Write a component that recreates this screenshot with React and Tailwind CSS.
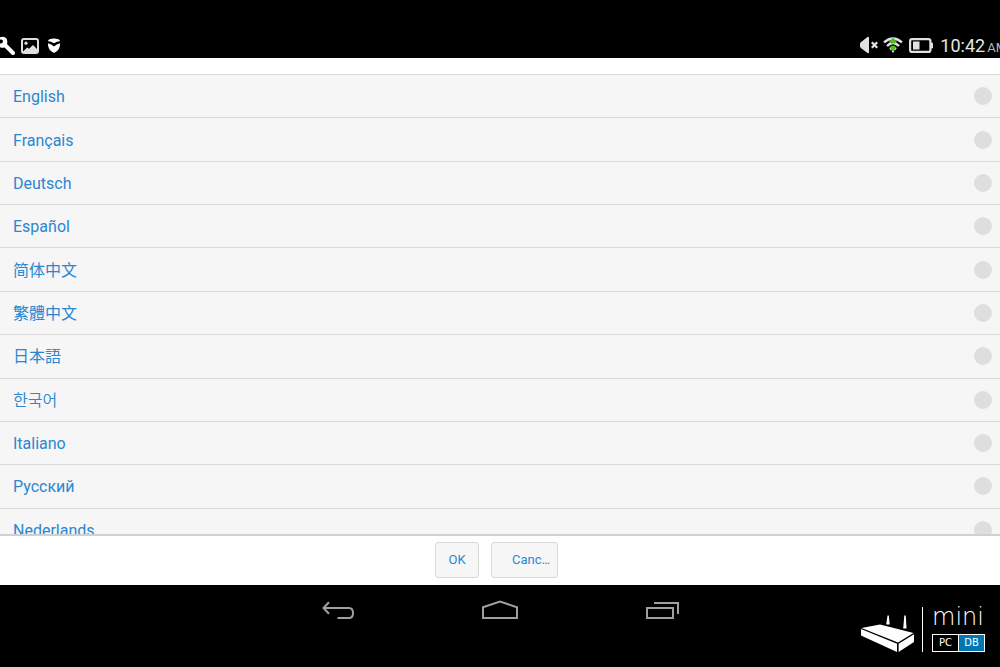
const LANGUAGES = [
  { code: 'en', name: 'English' },
  { code: 'fr', name: 'Français' },
  { code: 'de', name: 'Deutsch' },
  { code: 'es', name: 'Español' },
  { code: 'zh-CN', name: '简体中文', font: "font-['Roboto','Noto_Sans_CJK_SC',sans-serif]" },
  { code: 'zh-TW', name: '繁體中文', font: "font-['Roboto','Noto_Sans_CJK_TC',sans-serif]" },
  { code: 'ja', name: '日本語', font: "font-['Roboto','Noto_Sans_CJK_JP',sans-serif]" },
  { code: 'ko', name: '한국어', font: "font-['Roboto','Noto_Sans_CJK_KR',sans-serif] font-[350]" },
  { code: 'it', name: 'Italiano' },
  { code: 'ru', name: 'Русский' },
  { code: 'nl', name: 'Nederlands' },
]

function StatusBar() {
  return (
    <header className="h-[58px] shrink-0 bg-black text-[#e6e6e6] flex items-end justify-between overflow-hidden pb-[2px]">
      {/* Notifications */}
      <div className="flex items-center h-5 gap-[6px]">
        <svg className="w-[15px] h-5" viewBox="0 0 15 20" fill="none">
          <path d="M4.5 8.5 13 17" stroke="white" strokeWidth="4" strokeLinecap="round" />
          <path d="M0 1.2 3.5 0.8C7 1.5 8 5 7 8.5L4.5 11.5C2.5 12 1 12 0 11V7.5L2.2 7.2 3.2 4.8 1.5 3.4 0 3.4Z" fill="white" />
        </svg>
        <svg className="w-[18px] h-4" viewBox="0 0 18 16" fill="none">
          <rect x="1" y="1" width="16" height="14" rx="2" stroke="#dedede" strokeWidth="2" />
          <circle cx="5" cy="5.2" r="1.6" fill="#dedede" />
          <path d="M2 14.5V13.5L6.2 9.5 8 10.8 12 7 16 11V14.5Z" fill="#dedede" />
        </svg>
        <svg className="w-[18px] h-4" viewBox="0 0 18 16" fill="white">
          <path d="M4.5 1.2Q9 0 13.5 1.2Q15.5 2 14.8 3.2Q12 3.4 9 5.2Q6 3.4 3.2 3.2Q2.5 2 4.5 1.2Z" />
          <path d="M3 5.2Q6.5 5.8 9 8.6Q11.5 5.8 15 5.2Q15.6 12 9 15Q2.4 12 3 5.2Z" />
        </svg>
      </div>

      {/* System icons and clock */}
      <div className="flex items-center h-5 shrink-0 -mr-[7px]">
        <svg className="w-[19px] h-5" viewBox="0 0 19 20" fill="none">
          <path d="M0 8Q0 6.2 1.5 5.8L7.5 1Q9 0.2 9 2V16Q9 17.8 7.5 17L1.5 12.4Q0 11.8 0 10Z" fill="#e2e2e2" />
          <path d="M11.8 6.2 17.2 11.8M17.2 6.2 11.8 11.8" stroke="#e2e2e2" strokeWidth="2.2" />
        </svg>
        <svg className="w-5 h-5 ml-1" viewBox="0 0 20 20" fill="none">
          <path d="M1 6.3Q10-1.5 19 6.3M4 10Q10 4 16 10M7 13.2Q10 11 13 13.2" stroke="#e2e2e2" strokeWidth="2.4" />
          <path d="M10 1.8 14 6H12V7.5H8V6H6Z" fill="#45c414" />
          <path d="M8 9.8H12V10.8H14L10 15 6 10.8H8Z" fill="#45c414" />
          <path d="M8.3 14.6H11.7L10 17Z" fill="#e2e2e2" />
        </svg>
        <svg className="w-6 h-5 ml-[6px]" viewBox="0 0 24 20" fill="none">
          <rect x="1.1" y="3.1" width="20.3" height="12.8" rx="2" stroke="#e2e2e2" strokeWidth="2.2" />
          <path d="M22 6.5H22.8Q24 6.5 24 7.7V11.3Q24 12.5 22.8 12.5H22Z" fill="#e2e2e2" />
          <rect x="4" y="5.5" width="6.5" height="8" fill="#e2e2e2" />
        </svg>
        <time className="ml-[7px] pt-0.5 text-lg leading-5 whitespace-nowrap">
          10:42<span className="ml-0.5 text-[13px] leading-5 text-[#b5b5b5]">AM</span>
        </time>
      </div>
    </header>
  )
}

function LanguageRow({ language }) {
  return (
    <label className="flex items-center justify-between pl-[13px] pr-2 border-t border-[#d9d9d9] bg-[#f6f6f6] text-base leading-6">
      <span lang={language.code} className={`pt-0.5 ${language.font ?? ''}`}>{language.name}</span>
      <input
        type="radio"
        name="language"
        value={language.code}
        className="appearance-none size-[18px] rounded-full bg-[#dedede] checked:bg-[#2a87d0]"
      />
    </label>
  )
}

function Logo() {
  return (
    <div className="absolute right-[15px] bottom-[15px] flex h-[45px]">
      <svg className="w-[53px] h-[45px]" viewBox="0 0 53 45" fill="white">
        <path d="M0.5 21 19 17.5 52.5 26 37 35.5Z" />
        <path d="M0 22 36 36.8V45L0 28.5Z" />
        <path d="M37.6 36.8 53 27.2V35L37.6 45Z" />
        <path d="M26.5 8.5 27.8 8.5 28.7 17.5H25.2Z" />
        <path d="M43.3 8.5 44.8 8.5 45.5 21.5H42.2Z" />
      </svg>
      <div className="ml-2 w-px bg-white" />
      <div className="ml-[9px] w-[53px] flex flex-col justify-between text-white">
        <span className="text-2xl leading-5 font-extralight font-['DejaVu_Sans_Light','DejaVu_Sans',sans-serif]">mini</span>
        <div className="flex h-[18px] border border-white text-[10px] leading-4 text-center font-['DejaVu_Sans',sans-serif]">
          <span className="flex-1">PC</span>
          <span className="flex-1 border-l border-white bg-[#0077b0]">DB</span>
        </div>
      </div>
    </div>
  )
}

function NavBar() {
  return (
    <nav className="relative h-[82px] shrink-0 bg-black text-[#a0a0a0] flex justify-center">
      <button type="button" aria-label="Back" className="w-[162px] h-[50px] flex items-center justify-center">
        <svg className="w-9 h-5" viewBox="0 0 36 20" fill="none" stroke="currentColor" strokeWidth="2">
          <path d="M3.5 8H29Q33 8 33 13T29 18H17.5M9 2.2 3.5 8 9 13.8" />
        </svg>
      </button>
      <button type="button" aria-label="Home" className="w-[162px] h-[50px] flex items-center justify-center">
        <svg className="w-9 h-5" viewBox="0 0 36 20" fill="none" stroke="currentColor" strokeWidth="2">
          <path d="M1 7.3 18 1.5 35 7.3V18H1Z" />
        </svg>
      </button>
      <button type="button" aria-label="Recent apps" className="w-[162px] h-[50px] flex items-center justify-center">
        <svg className="w-9 h-5" viewBox="0 0 36 20" fill="none" stroke="currentColor" strokeWidth="2">
          <path d="M3 8H29V18H3ZM10 3H34V14" />
        </svg>
      </button>
      <Logo />
    </nav>
  )
}

export default function App() {
  return (
    <div className="h-screen flex flex-col bg-white text-[#2a87d0] overflow-hidden font-['Roboto',sans-serif]">
      <StatusBar />
      <main className="flex-1 min-h-0 flex flex-col pt-4">
        <div className="flex-1 min-h-0 overflow-hidden">
          <div className="grid auto-rows-fr h-[477px]" role="radiogroup" aria-label="Language">
            {LANGUAGES.map((language) => (
              <LanguageRow key={language.code} language={language} />
            ))}
          </div>
        </div>
        <div className="h-[51px] shrink-0 flex items-start justify-center gap-3 border-t-2 border-[#d0d0d0] bg-white pt-[6px] pr-[7px] text-[13px] leading-4">
          <button type="button" className="h-9 w-11 rounded-[3px] border border-[#d9d9d9] bg-[#f6f6f6]">OK</button>
          <button type="button" className="h-9 w-[67px] rounded-[3px] border border-[#d9d9d9] bg-[#f6f6f6] pl-5 text-left">Canc…</button>
        </div>
      </main>
      <NavBar />
    </div>
  )
}
